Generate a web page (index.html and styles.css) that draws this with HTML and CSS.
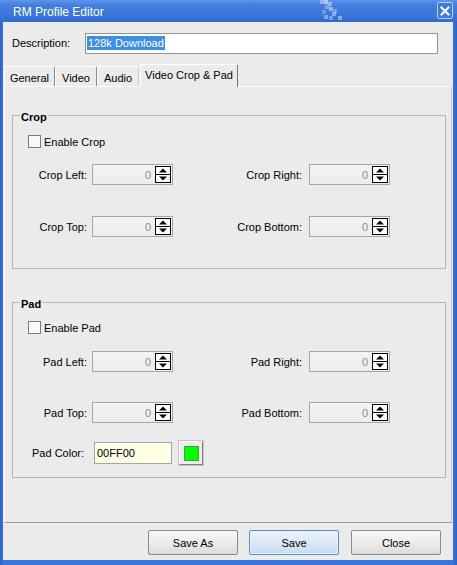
FILE: index.html
```html
<!DOCTYPE html>
<html>
<head>
<meta charset="utf-8">
<title>RM Profile Editor</title>
<link rel="stylesheet" href="styles.css">
</head>
<body>
<div class="window">
  <div class="titlebar">
    <span class="title">RM Profile Editor</span>
    <svg class="pattern" width="24" height="21" viewBox="0 0 24 21">
      <rect x="0" y="0" width="4" height="4" fill="#fff" fill-opacity="0.35"/>
      <rect x="4" y="0" width="4" height="4" fill="#fff" fill-opacity="0.5"/>
      <rect x="8" y="2" width="4" height="4" fill="#fff" fill-opacity="0.4"/>
      <rect x="5" y="5" width="4" height="4" fill="#fff" fill-opacity="0.3"/>
      <rect x="9" y="7" width="4" height="4" fill="#fff" fill-opacity="0.45"/>
      <rect x="13" y="9" width="4" height="4" fill="#fff" fill-opacity="0.3"/>
      <rect x="2" y="10" width="4" height="4" fill="#fff" fill-opacity="0.25"/>
      <rect x="12" y="12" width="4" height="4" fill="#fff" fill-opacity="0.4"/>
      <rect x="4" y="15" width="4" height="4" fill="#fff" fill-opacity="0.38"/>
      <rect x="9" y="16" width="4" height="4" fill="#fff" fill-opacity="0.3"/>
      <rect x="18" y="16" width="4" height="4" fill="#fff" fill-opacity="0.4"/>
    </svg>
    <div class="close">
      <svg width="10" height="10" viewBox="0 0 10 10"><path d="M1.5 1.5L8.5 8.5M8.5 1.5L1.5 8.5" stroke="#fff" stroke-width="2" stroke-linecap="square"/></svg>
    </div>
  </div>
  <div class="client">
    <div class="desc-row">
      <span class="desc-label">Description:</span>
      <div class="textbox"><span class="selected">128k Download</span></div>
    </div>
    <div class="tabs">
      <div class="tab t-general">General</div>
      <div class="tab t-video">Video</div>
      <div class="tab t-audio">Audio</div>
      <div class="tab active">Video Crop &amp; Pad</div>
    </div>
    <div class="panel">
      <div class="group crop">
        <span class="legend">Crop</span>
        <div class="check-row"><span class="checkbox"></span><span>Enable Crop</span></div>
        <div class="field-row r1">
          <span class="lbl">Crop Left:</span>
          <div class="spin"><span class="val">0</span><svg class="arrows" width="16" height="17" viewBox="0 0 16 17"><rect x="0.5" y="0.5" width="15" height="16" fill="#fff" stroke="#000"/><path d="M0 8.5H16" stroke="#000"/><path d="M4 6.5L8 2.5L12 6.5Z" fill="#000"/><path d="M4 10.5L8 14.5L12 10.5Z" fill="#000"/></svg></div>
          <span class="lbl right">Crop Right:</span>
          <div class="spin"><span class="val">0</span><svg class="arrows" width="16" height="17" viewBox="0 0 16 17"><rect x="0.5" y="0.5" width="15" height="16" fill="#fff" stroke="#000"/><path d="M0 8.5H16" stroke="#000"/><path d="M4 6.5L8 2.5L12 6.5Z" fill="#000"/><path d="M4 10.5L8 14.5L12 10.5Z" fill="#000"/></svg></div>
        </div>
        <div class="field-row r2">
          <span class="lbl">Crop Top:</span>
          <div class="spin"><span class="val">0</span><svg class="arrows" width="16" height="17" viewBox="0 0 16 17"><rect x="0.5" y="0.5" width="15" height="16" fill="#fff" stroke="#000"/><path d="M0 8.5H16" stroke="#000"/><path d="M4 6.5L8 2.5L12 6.5Z" fill="#000"/><path d="M4 10.5L8 14.5L12 10.5Z" fill="#000"/></svg></div>
          <span class="lbl right">Crop Bottom:</span>
          <div class="spin"><span class="val">0</span><svg class="arrows" width="16" height="17" viewBox="0 0 16 17"><rect x="0.5" y="0.5" width="15" height="16" fill="#fff" stroke="#000"/><path d="M0 8.5H16" stroke="#000"/><path d="M4 6.5L8 2.5L12 6.5Z" fill="#000"/><path d="M4 10.5L8 14.5L12 10.5Z" fill="#000"/></svg></div>
        </div>
      </div>
      <div class="group pad">
        <span class="legend">Pad</span>
        <div class="check-row"><span class="checkbox"></span><span>Enable Pad</span></div>
        <div class="field-row r1">
          <span class="lbl">Pad Left:</span>
          <div class="spin"><span class="val">0</span><svg class="arrows" width="16" height="17" viewBox="0 0 16 17"><rect x="0.5" y="0.5" width="15" height="16" fill="#fff" stroke="#000"/><path d="M0 8.5H16" stroke="#000"/><path d="M4 6.5L8 2.5L12 6.5Z" fill="#000"/><path d="M4 10.5L8 14.5L12 10.5Z" fill="#000"/></svg></div>
          <span class="lbl right">Pad Right:</span>
          <div class="spin"><span class="val">0</span><svg class="arrows" width="16" height="17" viewBox="0 0 16 17"><rect x="0.5" y="0.5" width="15" height="16" fill="#fff" stroke="#000"/><path d="M0 8.5H16" stroke="#000"/><path d="M4 6.5L8 2.5L12 6.5Z" fill="#000"/><path d="M4 10.5L8 14.5L12 10.5Z" fill="#000"/></svg></div>
        </div>
        <div class="field-row r2">
          <span class="lbl">Pad Top:</span>
          <div class="spin"><span class="val">0</span><svg class="arrows" width="16" height="17" viewBox="0 0 16 17"><rect x="0.5" y="0.5" width="15" height="16" fill="#fff" stroke="#000"/><path d="M0 8.5H16" stroke="#000"/><path d="M4 6.5L8 2.5L12 6.5Z" fill="#000"/><path d="M4 10.5L8 14.5L12 10.5Z" fill="#000"/></svg></div>
          <span class="lbl right">Pad Bottom:</span>
          <div class="spin"><span class="val">0</span><svg class="arrows" width="16" height="17" viewBox="0 0 16 17"><rect x="0.5" y="0.5" width="15" height="16" fill="#fff" stroke="#000"/><path d="M0 8.5H16" stroke="#000"/><path d="M4 6.5L8 2.5L12 6.5Z" fill="#000"/><path d="M4 10.5L8 14.5L12 10.5Z" fill="#000"/></svg></div>
        </div>
        <div class="field-row r3">
          <span class="lbl color-lbl">Pad Color:</span>
          <div class="color-input">00FF00</div>
          <div class="color-btn"><span class="swatch"></span></div>
        </div>
      </div>
    </div>
    <div class="buttons">
      <div class="btn">Save As</div>
      <div class="btn default">Save</div>
      <div class="btn close-btn">Close</div>
    </div>
  </div>
</div>
</body>
</html>
```
FILE: styles.css
```css
* { box-sizing: border-box; }
html, body { margin: 0; padding: 0; }
body {
  width: 457px;
  height: 565px;
  overflow: hidden;
  font-family: "Liberation Sans", Arial, sans-serif;
  font-size: 11px;
  color: #000;
  background: #3a6fd6;
}
.window {
  width: 457px;
  height: 565px;
  display: flex;
  flex-direction: column;
  background: linear-gradient(90deg, #2c60c9, #3d74da 3px, #3d74da 453px, #2c60c9);
}
.titlebar {
  height: 22px;
  flex: none;
  display: flex;
  align-items: center;
  padding: 0 4px 0 13px;
  color: #fff;
  background: linear-gradient(#5d95ea, #437ede 25%, #3a75d9 70%, #3169d1);
}
.title {
  font-size: 12px;
  padding-top: 2px;
}
.pattern {
  margin-left: auto;
  align-self: flex-start;
}
.close {
  width: 16px;
  height: 17px;
  margin-left: 93px;
  margin-top: 2px;
  align-self: flex-start;
  border: 1px solid #b9cff3;
  border-radius: 2px;
  background: #3e7adc;
  display: flex;
  align-items: center;
  justify-content: center;
}
.client {
  flex: 1;
  margin: 0 4px 5px 3px;
  background: #ebebeb;
  display: flex;
  flex-direction: column;
}
.desc-row {
  height: 40px;
  flex: none;
  display: flex;
  align-items: flex-start;
  padding: 11px 0 0 9px;
}
.desc-label {
  width: 73px;
  line-height: 21px;
}
.textbox {
  width: 353px;
  height: 21px;
  border: 1px solid #8e9498;
  background: #fff;
  padding: 2px 0 0 1px;
}
.selected {
  display: inline-block;
  background: #3d8ee6;
  color: #fff;
  line-height: 14px;
  padding: 0 1px;
}
.tabs {
  height: 24px;
  flex: none;
  display: flex;
  align-items: flex-end;
  padding-left: 1px;
}
.tab {
  height: 20px;
  border-top: 1px solid #fff;
  border-left: 1px solid #fff;
  border-right: 1px solid #8a8a8a;
  border-radius: 2px 2px 0 0;
  display: flex;
  align-items: center;
  justify-content: center;
  padding-top: 2px;
  background: #ececec;
}
.t-general { width: 51px; }
.t-video { width: 42px; }
.t-audio { width: 42px; border-right-color: #d0d0d0; }
.tab.active {
  width: 98px;
  height: 23px;
  margin-bottom: -1px;
  margin-left: 1px;
  padding-top: 0;
  padding-bottom: 3px;
  position: relative;
  z-index: 1;
  background: #ebebeb;
  border-right-color: #777;
}
.panel {
  height: 437px;
  flex: none;
  margin: 0 1px;
  border-top: 1px solid #fff;
  border-left: 1px solid #fff;
  border-right: 1px solid #c9c9c9;
  border-bottom: 1px solid #999;
  padding: 28px 5px 0 7px;
}
.group {
  position: relative;
  border: 1px solid #b5b5b5;
}
.crop {
  height: 154px;
  padding-top: 19px;
}
.pad {
  height: 176px;
  margin-top: 33px;
  padding-top: 18px;
}
.legend {
  position: absolute;
  left: 7px;
  top: -5px;
  padding: 0 1px;
  background: #ebebeb;
  font-weight: bold;
  line-height: 12px;
}
.check-row {
  display: flex;
  align-items: center;
  height: 13px;
  padding-left: 15px;
  gap: 3px;
}
.checkbox {
  width: 13px;
  height: 13px;
  border: 1px solid #7a7a7a;
  background: #f9f9f9;
}
.field-row {
  display: flex;
  align-items: center;
  height: 21px;
}
.crop .r1 { margin-top: 16px; }
.crop .r2 { margin-top: 31px; }
.pad .r1 { margin-top: 17px; }
.pad .r2 { margin-top: 30px; }
.pad .r3 { margin-top: 18px; height: 24px; }
.lbl {
  width: 79px;
  text-align: right;
  padding-right: 5px;
}
.lbl.right {
  width: 136px;
  padding-right: 7px;
}
.lbl.color-lbl {
  width: 81px;
  padding-right: 10px;
}
.spin {
  width: 81px;
  height: 21px;
  border: 1px solid #a5a5a5;
  background: linear-gradient(#f3f3f3, #ececec);
  display: flex;
  align-items: center;
  padding-right: 1px;
}
.val {
  flex: 1;
  text-align: right;
  color: #8c8c8c;
  padding-right: 4px;
}
.arrows { flex: none; }
.color-input {
  width: 78px;
  height: 22px;
  border: 1px solid #a5a5a5;
  background: #ffffe6;
  padding-left: 2px;
  line-height: 20px;
}
.color-btn {
  width: 24px;
  height: 24px;
  margin-left: 7px;
  border: 1px solid;
  border-color: #fff #7f7f7f #7f7f7f #fff;
  box-shadow: 0 0 0 1px #c4c4c4;
  background: #ececec;
  display: flex;
  align-items: center;
  justify-content: center;
}
.swatch {
  width: 15px;
  height: 15px;
  background: #00ff00;
  border: 1px solid #3aa53a;
}
.buttons {
  flex: 1;
  display: flex;
  justify-content: flex-end;
  align-items: flex-start;
  padding: 7px 12px 0 0;
  gap: 11px;
}
.btn {
  width: 90px;
  height: 25px;
  border: 1px solid #8a8a8a;
  border-radius: 2px;
  background: linear-gradient(#f7f7f7, #ececec 50%, #dcdcdc);
  display: flex;
  align-items: center;
  justify-content: center;
}
.btn.default {
  border-color: #5c8cc8;
  background: linear-gradient(#edf4fc, #dbe8f7 50%, #c9dbf1);
  box-shadow: inset 0 0 0 1px #e8f2fd;
}
.close-btn { margin-left: 1px; }
```
